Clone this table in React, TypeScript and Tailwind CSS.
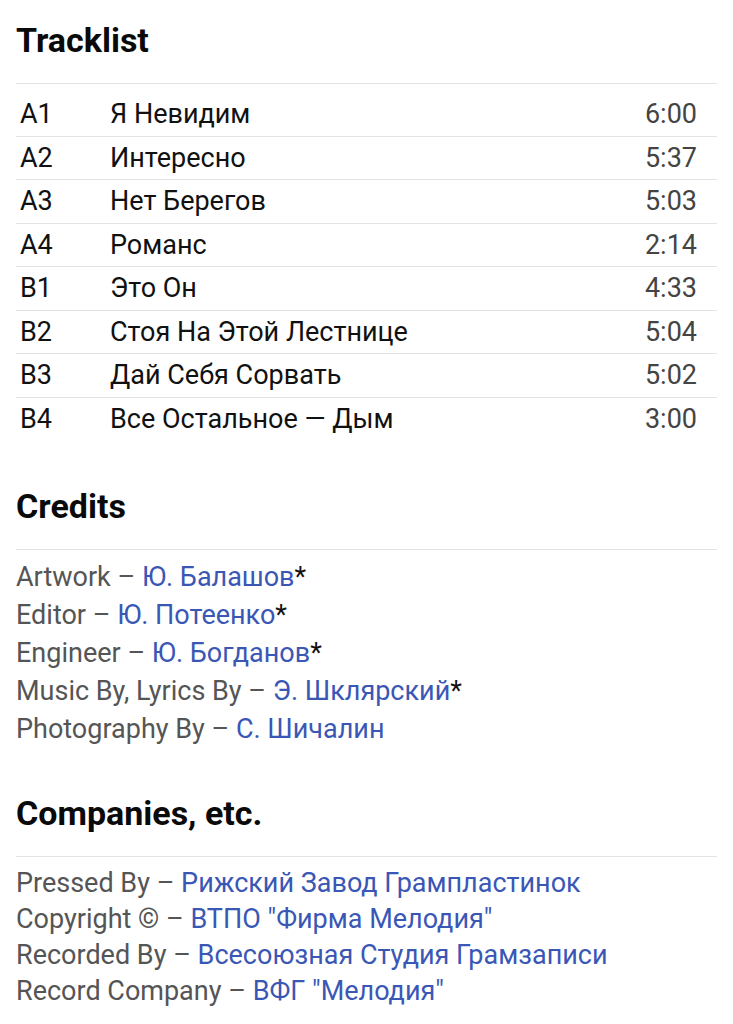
const tracks = [
  { pos: 'A1', title: 'Я Невидим', dur: '6:00' },
  { pos: 'A2', title: 'Интересно', dur: '5:37' },
  { pos: 'A3', title: 'Нет Берегов', dur: '5:03' },
  { pos: 'A4', title: 'Романс', dur: '2:14' },
  { pos: 'B1', title: 'Это Он', dur: '4:33' },
  { pos: 'B2', title: 'Стоя На Этой Лестнице', dur: '5:04' },
  { pos: 'B3', title: 'Дай Себя Сорвать', dur: '5:02' },
  { pos: 'B4', title: 'Все Остальное — Дым', dur: '3:00' },
];

const credits = [
  { role: 'Artwork', name: 'Ю. Балашов', star: true },
  { role: 'Editor', name: 'Ю. Потеенко', star: true },
  { role: 'Engineer', name: 'Ю. Богданов', star: true },
  { role: 'Music By, Lyrics By', name: 'Э. Шклярский', star: true },
  { role: 'Photography By', name: 'С. Шичалин', star: false },
];

const companies = [
  { role: 'Pressed By', name: 'Рижский Завод Грампластинок' },
  { role: 'Copyright ©', name: 'ВТПО "Фирма Мелодия"' },
  { role: 'Recorded By', name: 'Всесоюзная Студия Грамзаписи' },
  { role: 'Record Company', name: 'ВФГ "Мелодия"' },
];

function Heading({ children }: { children: React.ReactNode }) {
  return (
    <h2 className="text-[34px] leading-[40px] font-bold text-[#0a0a0a] pb-[23px] border-b border-[#e3e3e3]">
      {children}
    </h2>
  );
}

export default function App() {
  return (
    <div className="min-h-[1024px] bg-white px-4 pt-[20px] font-['Roboto',sans-serif]">
      <section>
        <Heading>Tracklist</Heading>
        <div className="mt-[9px]">
          {tracks.map((t, i) => (
            <div
              key={t.pos}
              className={`flex items-center h-[43.5px] text-[27px] ${
                i < tracks.length - 1 ? 'border-b border-[#e3e3e3]' : ''
              }`}
            >
              <span className="w-[94px] pl-1 text-[#111]">{t.pos}</span>
              <span className="flex-1 text-[#111]">{t.title}</span>
              <span className="pr-5 text-[#444]">{t.dur}</span>
            </div>
          ))}
        </div>
      </section>

      <section className="mt-[45px]">
        <Heading>Credits</Heading>
        <div className="pt-[8px] text-[27px] leading-[38px]">
          {credits.map((c) => (
            <div key={c.role}>
              <span className="text-[#555]">{c.role} – </span>
              <span className="text-[#3a57b5]">{c.name}</span>
              {c.star && <span className="text-[#111]">*</span>}
            </div>
          ))}
        </div>
      </section>

      <section className="mt-[45px]">
        <Heading>Companies, etc.</Heading>
        <div className="pt-[8px] text-[27px] leading-[36px]">
          {companies.map((c) => (
            <div key={c.role}>
              <span className="text-[#555]">{c.role} – </span>
              <span className="text-[#3a57b5]">{c.name}</span>
            </div>
          ))}
        </div>
      </section>
    </div>
  );
}
